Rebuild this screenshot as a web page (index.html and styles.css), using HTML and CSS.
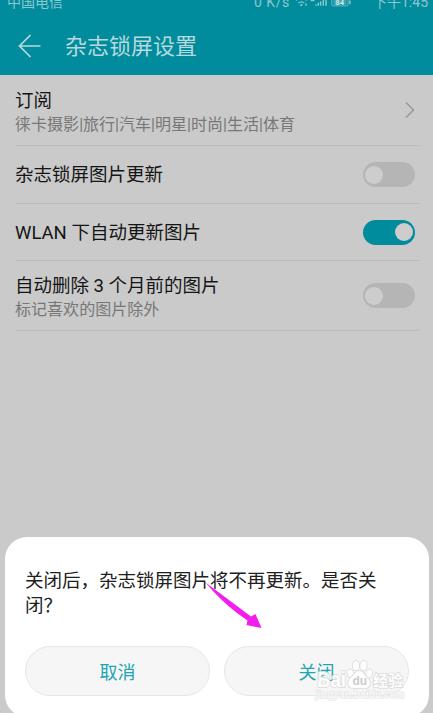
FILE: index.html
```html
<!DOCTYPE html>
<html lang="zh-CN">
<head>
<meta charset="utf-8">
<title>杂志锁屏设置</title>
<link rel="stylesheet" href="styles.css">
</head>
<body>
<main class="screen">
  <header class="header">
    <div class="status">
      <span class="carrier">中国电信</span>
      <span class="speed">0 K/s</span>
      <svg class="signals" width="100" height="20" viewBox="0 0 100 20" fill="none" stroke="currentColor">
        <path d="M0 8Q7 1 14 8M3 11.500Q7 8 11 11.500" stroke-width="1.5"/>
        <circle cx="7" cy="14" r="1.500" fill="currentColor" stroke="none"/>
        <path d="M13 12v3M19 8h5M26 13v2M29 11v4M32 9v6M35.500 7v8M39 7v8" stroke-width="1.9"/>
        <rect x="46.500" y="5" width="21" height="10" rx="1.500"/>
        <rect x="48.500" y="5" width="17" height="8.500" fill="currentColor" stroke="none" opacity=".4"/>
        <path d="M70 8v5" stroke-width="2"/>
        <text class="charge" x="51" y="13.500">84</text>
      </svg>
      <span class="time">下午1:45</span>
    </div>
    <div class="titlebar">
      <svg class="back" width="24" height="24" viewBox="0 0 24 24" fill="none" stroke="currentColor" stroke-width="1.700"><path d="M22.500 12H1.500M12.500 1L1.500 12l11 11"/></svg>
      <h1>杂志锁屏设置</h1>
    </div>
  </header>
  <section class="settings">
    <div class="row tall">
      <div class="copy"><h2>订阅</h2><p>徕卡摄影|旅行|汽车|明星|时尚|生活|体育</p></div>
      <svg class="chevron" width="10" height="18" viewBox="0 0 10 18" fill="none" stroke="currentColor" stroke-width="1.500"><path d="M1 1.500L8.500 9 1 16.500"/></svg>
    </div>
    <div class="row"><h2>杂志锁屏图片更新</h2><span class="switch"></span></div>
    <div class="row third"><h2>WLAN 下自动更新图片</h2><span class="switch on"></span></div>
    <div class="row tall">
      <div class="copy"><h2>自动删除 3 个月前的图片</h2><p>标记喜欢的图片除外</p></div><span class="switch"></span>
    </div>
  </section>
  <section class="dialog">
    <p class="message">关闭后，杂志锁屏图片将不再更新。是否关闭？</p>
    <div class="actions"><button>取消</button><button>关闭</button></div>
  </section>
  <svg class="pointer" width="60" height="50" viewBox="0 0 60 50"><path d="M2.500 .5L34 24 48 34.500 52.500 32 58.500 46 43.500 43 44.500 38.500 34 31Q17 18 2.500 .5Z" fill="#f31df0"/></svg>
  <svg class="watermark" width="100" height="50" viewBox="0 0 100 50">
    <g class="mark">
      <text class="brand" x="1" y="28" textLength="29" lengthAdjust="spacingAndGlyphs">Bai</text>
      <ellipse cx="34.500" cy="14.500" rx="3" ry="4.300" transform="rotate(-20 34.500 14.500)"/>
      <ellipse cx="40" cy="6.500" rx="3.200" ry="4.600"/>
      <ellipse cx="47.500" cy="6.500" rx="3.200" ry="4.600" transform="rotate(8 47.500 6.500)"/>
      <ellipse cx="53" cy="14.500" rx="3" ry="4.300" transform="rotate(20 53 14.500)"/>
      <path d="M43.500 12c4 0 5 4 8 7 4 3 3 10-2 10h-12c-7 0-6-7-3-10 4-3 4-7 9-7Z"/>
      <text class="jingyan" x="57" y="27" textLength="30">经验</text>
      <text class="url" x="0" y="38.500" textLength="88">jingyan.baidu.com</text>
    </g>
    <text class="du" x="36.500" y="26">du</text>
  </svg>
</main>
</body>
</html>
```

FILE: styles.css
```css
* { box-sizing: border-box; }
body { margin: 0; font-family: Roboto, "Noto Sans CJK SC", sans-serif; }
h1, h2, p { margin: 0; font-weight: 400; }
.screen { position: relative; width: 433px; height: 713px; overflow: hidden; background: #cacaca; }
.header { height: 75px; overflow: hidden; background: #008c9d; color: #b7d9dc; }
.status { display: flex; height: 18px; padding: 0 3px 0 7px; font-size: 14px; line-height: 20px; }
.status > * { flex: none; margin-top: -8px; color: #8dc7ce; }
.carrier { width: 247px; }
.speed { width: 42px; letter-spacing: .5px; }
.signals { width: 77px; }
.charge { font-size: 10px; font-weight: 700; fill: #d0e3e5; stroke: none; }
.time { white-space: nowrap; }
.titlebar { display: flex; align-items: center; height: 56px; padding-left: 18px; gap: 23px; }
.titlebar h1 { font-size: 22px; line-height: 30px; padding-top: 1px; }
.settings { padding: 0 14px 0 15px; }
.row { display: flex; align-items: center; justify-content: space-between; height: 58px; padding-right: 3px; border-bottom: 1px solid #bcbcbc; }
.row.tall { height: 70px; }
.row.tall:first-child { height: 71px; }
.row.third { height: 57px; }
h2 { font-size: 18.5px; line-height: 25px; padding-top: 2px; color: #151515; }
.copy { padding-top: 2px; }
.copy p { font-size: 16.05px; line-height: 22px; color: #777; white-space: nowrap; }
.chevron { color: #979797; margin-right: 1px; }
.switch { flex: none; width: 52px; height: 25px; margin-right: 1px; padding: 3.500px 2px; border-radius: 13px; background: #b5b5b5; }
.switch::before { content: ""; display: block; width: 18px; height: 18px; border-radius: 50%; background: #cdcdcd; }
.switch.on { background: #008c9d; }
.switch.on::before { margin-left: 30px; }
.dialog { position: absolute; left: 5px; top: 537px; width: 424px; height: 180px; padding: 32px 20px 0; border-radius: 22px; background: #fff; }
.message { width: 360px; height: 77px; font-size: 18.5px; line-height: 25px; color: #202020; }
.actions { display: flex; gap: 14px; }
.actions button { width: 185px; height: 50px; padding: 2px 0 0; border: 1px solid #e6e6e6; border-radius: 25px; background: #f6f6f6; color: #20a5b2; font: 18px/25px Roboto, "Noto Sans CJK SC", sans-serif; }
.pointer { position: absolute; left: 203px; top: 582px; }
.watermark { position: absolute; left: 316px; top: 659px; overflow: visible; }
.mark { fill: #fff; stroke: #d6d6d6; stroke-width: 1.600px; paint-order: stroke; opacity: .85; }
.brand { font: 700 22px "Liberation Sans", sans-serif; }
.jingyan { font: 700 15px "Noto Sans CJK SC", sans-serif; }
.url { font: 10px "Liberation Sans", sans-serif; stroke: #e4e4e4; }
.du { font: 700 12px "Liberation Sans", sans-serif; fill: #cdcdcd; }
```
